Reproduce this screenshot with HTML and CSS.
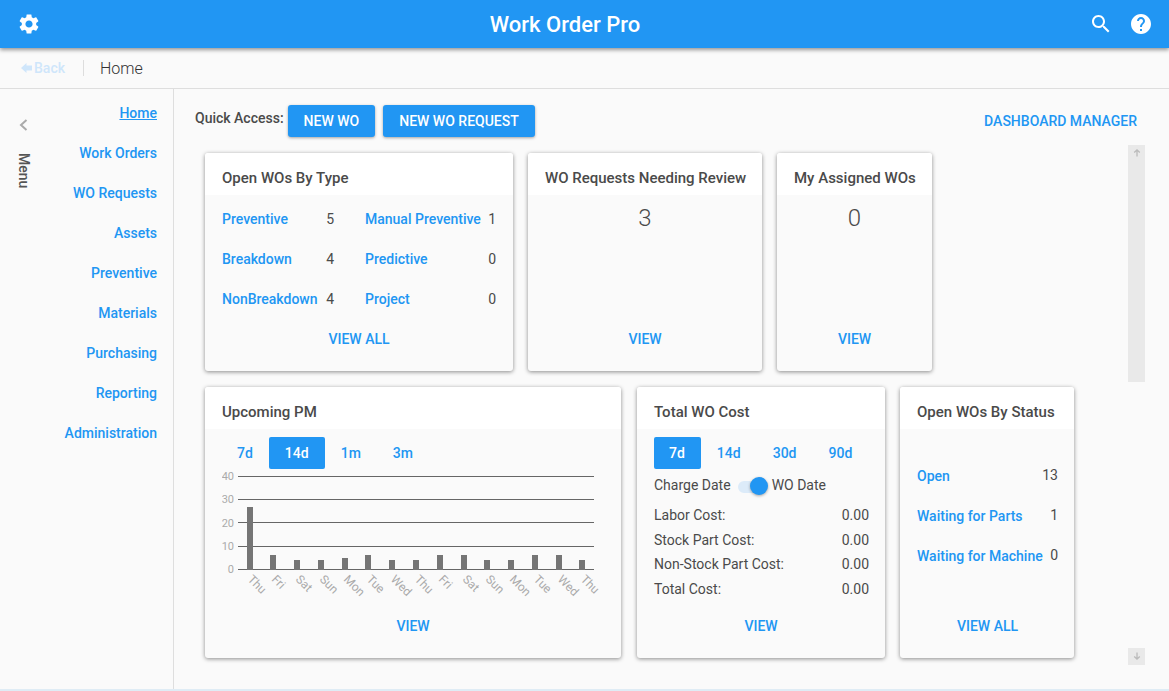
FILE: index.html
```html
<!DOCTYPE html>
<html>
<head>
  <title>Work Order Pro</title>
  <link rel="stylesheet" href="styles.css">
</head>
<body>
  <header class="topbar">
    <svg class="icon" viewBox="0 0 24 24"><path d="M19.14 12.94c.04-.3.06-.61.06-.94 0-.32-.02-.64-.07-.94l2.03-1.58c.18-.14.23-.41.12-.61l-1.92-3.32c-.12-.22-.37-.29-.59-.22l-2.39.96c-.5-.38-1.03-.7-1.62-.94l-.36-2.54c-.04-.24-.24-.41-.48-.41h-3.84c-.24 0-.43.17-.47.41l-.36 2.54c-.59.24-1.13.57-1.62.94l-2.39-.96c-.22-.08-.47 0-.59.22L2.74 8.87c-.12.21-.08.47.12.61l2.03 1.58c-.05.3-.09.63-.09.94s.02.64.07.94l-2.03 1.58c-.18.14-.23.41-.12.61l1.92 3.32c.12.22.37.29.59.22l2.39-.96c.5.38 1.03.7 1.62.94l.36 2.54c.05.24.24.41.48.41h3.84c.24 0 .44-.17.47-.41l.36-2.54c.59-.24 1.13-.56 1.62-.94l2.39.96c.22.08.47 0 .59-.22l1.92-3.32c.12-.22.07-.47-.12-.61l-2.01-1.58zM12 15.6c-1.98 0-3.6-1.62-3.6-3.6s1.62-3.6 3.6-3.6 3.6 1.62 3.6 3.6-1.62 3.6-3.6 3.6z"/></svg>
    <div class="app-title">Work Order Pro</div>
    <div class="top-actions">
      <svg class="icon" viewBox="0 0 24 24"><path d="M15.5 14h-.79l-.28-.27C15.41 12.59 16 11.11 16 9.5 16 5.91 13.09 3 9.5 3S3 5.91 3 9.5 5.91 16 9.5 16c1.61 0 3.09-.59 4.23-1.57l.27.28v.79l5 4.99L20.49 19l-4.99-5zm-6 0C7.01 14 5 11.99 5 9.5S7.01 5 9.5 5 14 7.01 14 9.5 11.99 14 9.5 14z"/></svg>
      <svg class="icon" viewBox="0 0 24 24"><path d="M12 2C6.48 2 2 6.48 2 12s4.48 10 10 10 10-4.48 10-10S17.52 2 12 2zm1 17h-2v-2h2v2zm2.07-7.75l-.9.92C13.45 12.9 13 13.5 13 15h-2v-.5c0-1.1.45-2.1 1.17-2.83l1.24-1.26c.37-.36.59-.86.59-1.41 0-1.1-.9-2-2-2s-2 .9-2 2H8c0-2.21 1.79-4 4-4s4 1.79 4 4c0 .88-.36 1.68-.93 2.25z"/></svg>
    </div>
  </header>

  <div class="crumbbar">
    <a class="back">
      <svg class="back-arrow" viewBox="0 0 11 10"><path d="M0 5 5.5 0v2.5H11v5H5.5V10z"/></svg>
      Back
    </a>
    <span class="crumb">Home</span>
  </div>

  <div class="layout">
    <aside class="sidebar">
      <div class="menu-toggle">
        <svg class="chevron" viewBox="0 0 9 12"><path d="M7.5 1 2 6l5.5 5"/></svg>
        <span class="menu-label">Menu</span>
      </div>
      <nav class="side-nav">
        <a class="active">Home</a>
        <a>Work Orders</a>
        <a>WO Requests</a>
        <a>Assets</a>
        <a>Preventive</a>
        <a>Materials</a>
        <a>Purchasing</a>
        <a>Reporting</a>
        <a>Administration</a>
      </nav>
    </aside>

    <main class="content">
      <div class="quick-bar">
        <span class="quick-label">Quick Access:</span>
        <button class="btn">NEW WO</button>
        <button class="btn">NEW WO REQUEST</button>
        <a class="manager-link">DASHBOARD MANAGER</a>
      </div>

      <div class="dashboard">
        <div class="card-rows">
          <div class="card-row">
            <section class="card card-type">
              <h2>Open WOs By Type</h2>
              <div class="card-body">
                <div class="type-grid">
                  <div class="stat"><a>Preventive</a><span>5</span></div>
                  <div class="stat"><a>Manual Preventive</a><span>1</span></div>
                  <div class="stat"><a>Breakdown</a><span>4</span></div>
                  <div class="stat"><a>Predictive</a><span>0</span></div>
                  <div class="stat"><a>NonBreakdown</a><span>4</span></div>
                  <div class="stat"><a>Project</a><span>0</span></div>
                </div>
                <a class="card-link">VIEW ALL</a>
              </div>
            </section>
            <section class="card card-review">
              <h2>WO Requests Needing Review</h2>
              <div class="card-body">
                <div class="big-num">3</div>
                <a class="card-link">VIEW</a>
              </div>
            </section>
            <section class="card card-assigned">
              <h2>My Assigned WOs</h2>
              <div class="card-body">
                <div class="big-num">0</div>
                <a class="card-link">VIEW</a>
              </div>
            </section>
          </div>

          <div class="card-row">
            <section class="card card-pm">
              <h2>Upcoming PM</h2>
              <div class="card-body">
                <div class="tabs">
                  <a>7d</a><a class="active">14d</a><a>1m</a><a>3m</a>
                </div>
                <svg class="chart" viewBox="222 470 382 130">
                  <g class="grid">
                    <line x1="238" x2="594" y1="476.5" y2="476.5"/>
                    <line x1="238" x2="594" y1="499.5" y2="499.5"/>
                    <line x1="238" x2="594" y1="522.5" y2="522.5"/>
                    <line x1="238" x2="594" y1="546.5" y2="546.5"/>
                    <line x1="238" x2="594" y1="569.5" y2="569.5"/>
                  </g>
                  <g class="y-labels">
                    <text x="234" y="480">40</text>
                    <text x="234" y="503">30</text>
                    <text x="234" y="527">20</text>
                    <text x="234" y="550">10</text>
                    <text x="234" y="573">0</text>
                  </g>
                  <g class="bars">
                    <rect x="247" y="507" width="6" height="63"/>
                    <rect x="270" y="555" width="6" height="15"/>
                    <rect x="294" y="560" width="6" height="10"/>
                    <rect x="318" y="560" width="6" height="10"/>
                    <rect x="342" y="558" width="6" height="12"/>
                    <rect x="365" y="555" width="6" height="15"/>
                    <rect x="389" y="560" width="6" height="10"/>
                    <rect x="413" y="560" width="6" height="10"/>
                    <rect x="437" y="555" width="6" height="15"/>
                    <rect x="461" y="555" width="6" height="15"/>
                    <rect x="484" y="560" width="6" height="10"/>
                    <rect x="508" y="560" width="6" height="10"/>
                    <rect x="532" y="555" width="6" height="15"/>
                    <rect x="556" y="555" width="6" height="15"/>
                    <rect x="579" y="560" width="6" height="10"/>
                  </g>
                  <g class="x-labels">
                    <text transform="translate(247 580) rotate(45)">Thu</text>
                    <text transform="translate(271 580) rotate(45)">Fri</text>
                    <text transform="translate(295 580) rotate(45)">Sat</text>
                    <text transform="translate(319 580) rotate(45)">Sun</text>
                    <text transform="translate(343 580) rotate(45)">Mon</text>
                    <text transform="translate(366 580) rotate(45)">Tue</text>
                    <text transform="translate(390 580) rotate(45)">Wed</text>
                    <text transform="translate(414 580) rotate(45)">Thu</text>
                    <text transform="translate(438 580) rotate(45)">Fri</text>
                    <text transform="translate(462 580) rotate(45)">Sat</text>
                    <text transform="translate(485 580) rotate(45)">Sun</text>
                    <text transform="translate(509 580) rotate(45)">Mon</text>
                    <text transform="translate(533 580) rotate(45)">Tue</text>
                    <text transform="translate(557 580) rotate(45)">Wed</text>
                    <text transform="translate(580 580) rotate(45)">Thu</text>
                  </g>
                </svg>
                <a class="card-link">VIEW</a>
              </div>
            </section>

            <section class="card card-cost">
              <h2>Total WO Cost</h2>
              <div class="card-body">
                <div class="tabs">
                  <a class="active">7d</a><a>14d</a><a>30d</a><a>90d</a>
                </div>
                <div class="date-switch">
                  <span>Charge Date</span>
                  <span class="switch"><span class="switch-thumb"></span></span>
                  <span>WO Date</span>
                </div>
                <div class="cost-row"><span>Labor Cost:</span><span>0.00</span></div>
                <div class="cost-row"><span>Stock Part Cost:</span><span>0.00</span></div>
                <div class="cost-row"><span>Non-Stock Part Cost:</span><span>0.00</span></div>
                <div class="cost-row"><span>Total Cost:</span><span>0.00</span></div>
                <a class="card-link">VIEW</a>
              </div>
            </section>

            <section class="card card-status">
              <h2>Open WOs By Status</h2>
              <div class="card-body">
                <div class="stat"><a>Open</a><span>13</span></div>
                <div class="stat"><a>Waiting for Parts</a><span>1</span></div>
                <div class="stat"><a>Waiting for Machine</a><span>0</span></div>
                <a class="card-link">VIEW ALL</a>
              </div>
            </section>
          </div>
        </div>

        <div class="scrollbar">
          <div class="scroll-track">
            <svg class="scroll-arrow" viewBox="0 0 8 8"><path d="M4 7.5V1M1.2 3.6 4 1l2.8 2.6"/></svg>
          </div>
          <div class="scroll-btn">
            <svg class="scroll-arrow" viewBox="0 0 8 8"><path d="M4 .5V7M1.2 4.4 4 7l2.8-2.6"/></svg>
          </div>
        </div>
      </div>
    </main>
  </div>
  <div class="page-edge"></div>
</body>
</html>
```

FILE: styles.css
```css
* {
  box-sizing: border-box;
}

html, body {
  height: 100%;
}

body {
  margin: 0;
  display: flex;
  flex-direction: column;
  overflow: hidden;
  background-color: #fafafa;
  color: #4a4a4a;
  font-family: Roboto, "Liberation Sans", sans-serif;
  font-size: 14px;
}

a {
  color: #2196f3;
  font-weight: 500;
  text-decoration: none;
}

/* header */
.topbar {
  position: relative;
  flex: none;
  display: flex;
  align-items: center;
  height: 48px;
  padding: 0 16px 0 17px;
  background-color: #2196f3;
  box-shadow: 0 2px 4px rgba(0, 0, 0, 0.4);
}

.icon {
  display: block;
  width: 24px;
  height: 24px;
  fill: #fff;
}

.app-title {
  flex: 1;
  color: #fff;
  font-size: 22px;
  font-weight: 500;
  text-align: center;
}

.top-actions {
  display: flex;
  gap: 16px;
}

/* breadcrumb */
.crumbbar {
  flex: none;
  display: flex;
  align-items: center;
  height: 41px;
  padding-left: 21px;
  border-bottom: 1px solid #dedede;
}

.back {
  display: flex;
  align-items: center;
  gap: 2px;
  width: 63px;
  height: 16px;
  border-right: 1px solid #ddd;
  color: #cfe6fb;
}

.back-arrow {
  width: 11px;
  height: 10px;
  fill: #cfe6fb;
}

.crumb {
  margin-left: 16px;
  color: #333;
  font-size: 16px;
  font-weight: 300;
}

/* sidebar */
.layout {
  flex: 1;
  display: flex;
  min-height: 0;
}

.sidebar {
  flex: none;
  display: flex;
  justify-content: space-between;
  width: 174px;
  border-right: 1px solid #dedede;
}

.menu-toggle {
  display: flex;
  flex-direction: column;
  align-items: center;
  width: 47px;
  padding-top: 30px;
}

.chevron {
  width: 9px;
  height: 12px;
  fill: none;
  stroke: #aaa;
  stroke-width: 2;
}

.menu-label {
  margin-top: 22px;
  font-weight: 500;
  color: #555;
  writing-mode: vertical-rl;
}

.side-nav {
  display: flex;
  flex-direction: column;
  align-items: flex-end;
  padding: 4px 16px 0 0;
}

.side-nav a {
  line-height: 40px;
}

.side-nav a.active {
  text-decoration: underline;
}

/* main area */
.content {
  flex: 1;
  display: flex;
  flex-direction: column;
  min-width: 0;
  padding: 16px 24px 0 21px;
}

.quick-bar {
  display: flex;
  align-items: center;
  height: 32px;
}

.quick-label {
  margin-right: 4px;
  padding-bottom: 6px;
  font-weight: 500;
}

.btn {
  height: 32px;
  margin-right: 8px;
  padding: 0 16px;
  border: 0;
  border-radius: 3px;
  background-color: #2196f3;
  color: #fff;
  font-family: inherit;
  font-size: 14px;
  font-weight: 500;
  box-shadow: 0 1px 3px rgba(0, 0, 0, 0.35);
}

.manager-link {
  margin: 0 8px 0 auto;
}

.dashboard {
  display: flex;
  justify-content: space-between;
  margin-top: 8px;
  padding-left: 10px;
}

.card-rows {
  display: flex;
  flex-direction: column;
  gap: 16px;
  padding-top: 8px;
}

.card-row {
  display: flex;
  gap: 15px;
}

.card {
  display: flex;
  flex-direction: column;
  border-radius: 3px;
  box-shadow: 0 1px 4px rgba(0, 0, 0, 0.45);
}

.card h2 {
  flex: none;
  height: 42px;
  margin: 0;
  padding: 8px 17px 0;
  border-radius: 3px 3px 0 0;
  background-color: #fff;
  font-size: 15px;
  font-weight: 500;
  line-height: 34px;
  white-space: nowrap;
}

.card-body {
  flex: 1;
  display: flex;
  flex-direction: column;
  padding: 0 17px 12px;
}

.card-link {
  margin-top: auto;
  line-height: 40px;
  text-align: center;
}

.card-type { width: 308px; height: 218px; }
.card-review { width: 234px; height: 218px; }
.card-assigned { width: 155px; height: 218px; }
.card-pm { width: 416px; height: 271px; margin-right: 1px; }
.card-cost { width: 248px; height: 271px; }
.card-status { width: 174px; height: 271px; }

.card-type .card-body {
  padding-top: 4px;
}

.type-grid {
  display: grid;
  grid-template-columns: 112px 131px;
  column-gap: 31px;
}

.stat {
  display: flex;
  justify-content: space-between;
  align-items: center;
  height: 40px;
  white-space: nowrap;
}

.big-num {
  padding-top: 8px;
  font-size: 24px;
  font-weight: 300;
  line-height: 30px;
  text-align: center;
}

.card-cost .card-body {
  padding-right: 16px;
}

.card-cost .card-link {
  margin-right: 1px;
}

.card-status .card-body {
  padding: 27px 16px 12px 17px;
}

.card-status .stat span {
  padding: 0 0 2px;
}

/* date range tabs */
.tabs {
  display: flex;
  flex: none;
  height: 32px;
  margin-top: 8px;
}

.tabs a {
  padding: 0 16px;
  border-radius: 2px;
  line-height: 32px;
}

.tabs a.active {
  background-color: #2196f3;
  color: #fff;
}

.card-pm .tabs {
  margin-left: -1px;
}

.card-cost .tabs a:first-child {
  padding: 0 16px 0 15px;
}

/* chart */
.chart {
  display: block;
  flex: none;
  width: 382px;
  height: 130px;
  margin-top: 1px;
}

.grid line {
  stroke: #666;
  stroke-width: 1;
}

.bars rect {
  fill: #757575;
}

.y-labels text {
  fill: #aaa;
  font-size: 11px;
  text-anchor: end;
}

.x-labels text {
  fill: #aaa;
  font-size: 12px;
}

/* cost card */
.date-switch {
  display: flex;
  align-items: center;
  height: 32px;
  margin-bottom: 2px;
}

.switch {
  position: relative;
  width: 28px;
  height: 12px;
  margin: 4px 6px 0 7px;
  border-radius: 6px;
  background-color: #dcebf9;
}

.switch-thumb {
  position: absolute;
  top: -4px;
  right: -2px;
  width: 18px;
  height: 18px;
  border-radius: 50%;
  background-color: #2196f3;
  box-shadow: 0 1px 3px rgba(0, 0, 0, 0.35);
}

.cost-row {
  display: flex;
  justify-content: space-between;
  height: 24.6px;
  line-height: 24px;
}

/* scrollbar */
.scrollbar {
  display: flex;
  flex-direction: column;
  justify-content: space-between;
  width: 17px;
  height: 520px;
}

.scroll-track {
  height: 237px;
  padding-top: 4px;
  background-color: #e9e9e9;
}

.scroll-btn {
  height: 17px;
  padding-top: 4px;
  background-color: #e9e9e9;
}

.scroll-arrow {
  display: block;
  width: 8px;
  height: 8px;
  margin: 0 auto;
  fill: none;
  stroke: #bbb;
  stroke-width: 1.3;
}

.page-edge {
  flex: none;
  height: 2px;
  background-color: #dfecf5;
}
```
